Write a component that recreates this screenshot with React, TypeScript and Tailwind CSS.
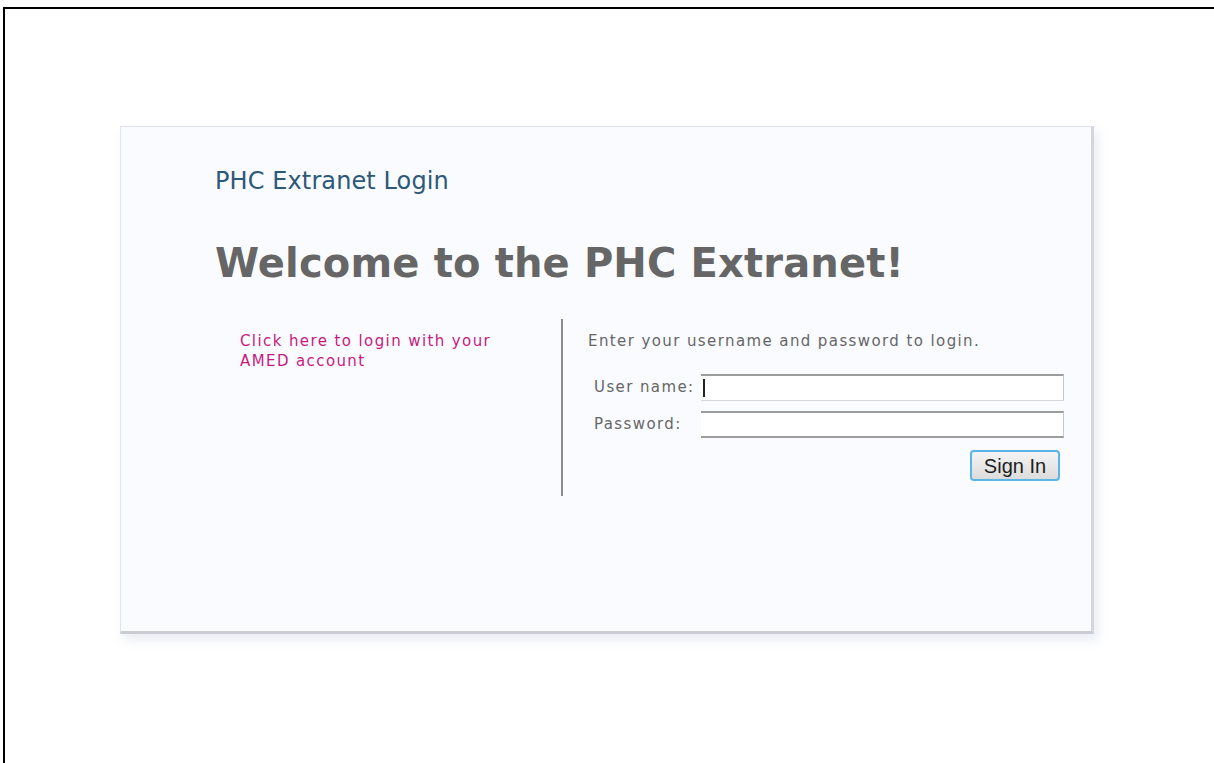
export default function App() {
  return (
    <div className="h-[763px] w-[1214px] overflow-hidden bg-white">
      <div className="ml-[3px] mt-[7px] h-[800px] w-[1260px] border-l-2 border-t-2 border-black pl-[115px] pt-[117px]">
        <div className="h-[508px] w-[974px] border border-[#dfe4ec] border-b-[3px] border-r-[3px] border-b-[#c9ccd3] border-r-[#d3d6dc] bg-[#f9fbff] pl-[94px] shadow-[4px_6px_10px_rgba(190,200,220,0.35)] font-['DejaVu_Sans',sans-serif]">
          <h1 className="mt-[40px] text-[24px] leading-[28px] tracking-[0.1px] text-[#2e5878]">PHC Extranet Login</h1>
          <h2 className="mt-[43px] text-[40px] font-bold leading-[50px] tracking-[0.15px] text-[#666666]">
            Welcome to the PHC Extranet!
          </h2>
          <div className="mt-[31px] flex">
            <div className="w-[346px] pl-[25px] pt-[12px]">
              <a href="#" className="block w-[290px] text-[15px] leading-[20px] tracking-[1.4px] text-[#c71a80]">
                Click here to login with your AMED account
              </a>
            </div>
            <div className="h-[177px] w-[2px] bg-[#8a8a8a]" />
            <div className="pl-[25px] pt-[12px]">
              <p className="text-[15px] leading-[20px] tracking-[1.4px] text-[#666666]">
                Enter your username and password to login.
              </p>
              <div className="mt-[23px] grid grid-cols-[107px_363px] items-center gap-y-[10px] pl-[6px] text-[15px] tracking-[1.4px] text-[#666666]">
                <label>User name:</label>
                <div className="relative h-[27px] border-t-2 border-b border-r border-t-[#9c9c9c] border-b-[#d8d8d8] border-r-[#c8c8c8] bg-white">
                  <span className="absolute left-[2px] top-[3px] h-[18px] w-[2px] bg-[#222]" />
                </div>
                <label>Password:</label>
                <div className="h-[27px] border-t-2 border-b-2 border-r border-t-[#9c9c9c] border-b-[#9c9c9c] border-r-[#c8c8c8] bg-white" />
              </div>
              <div className="mt-[12px] flex justify-end pr-[4px]">
                <button className="h-[31px] w-[90px] rounded-[4px] border-2 border-[#5ab6e4] bg-gradient-to-b from-[#f4f4f4] to-[#dcdcdc] font-['Liberation_Sans',sans-serif] text-[20px] leading-none text-[#1e1e1e]">
                  Sign In
                </button>
              </div>
            </div>
          </div>
        </div>
      </div>
    </div>
  );
}
